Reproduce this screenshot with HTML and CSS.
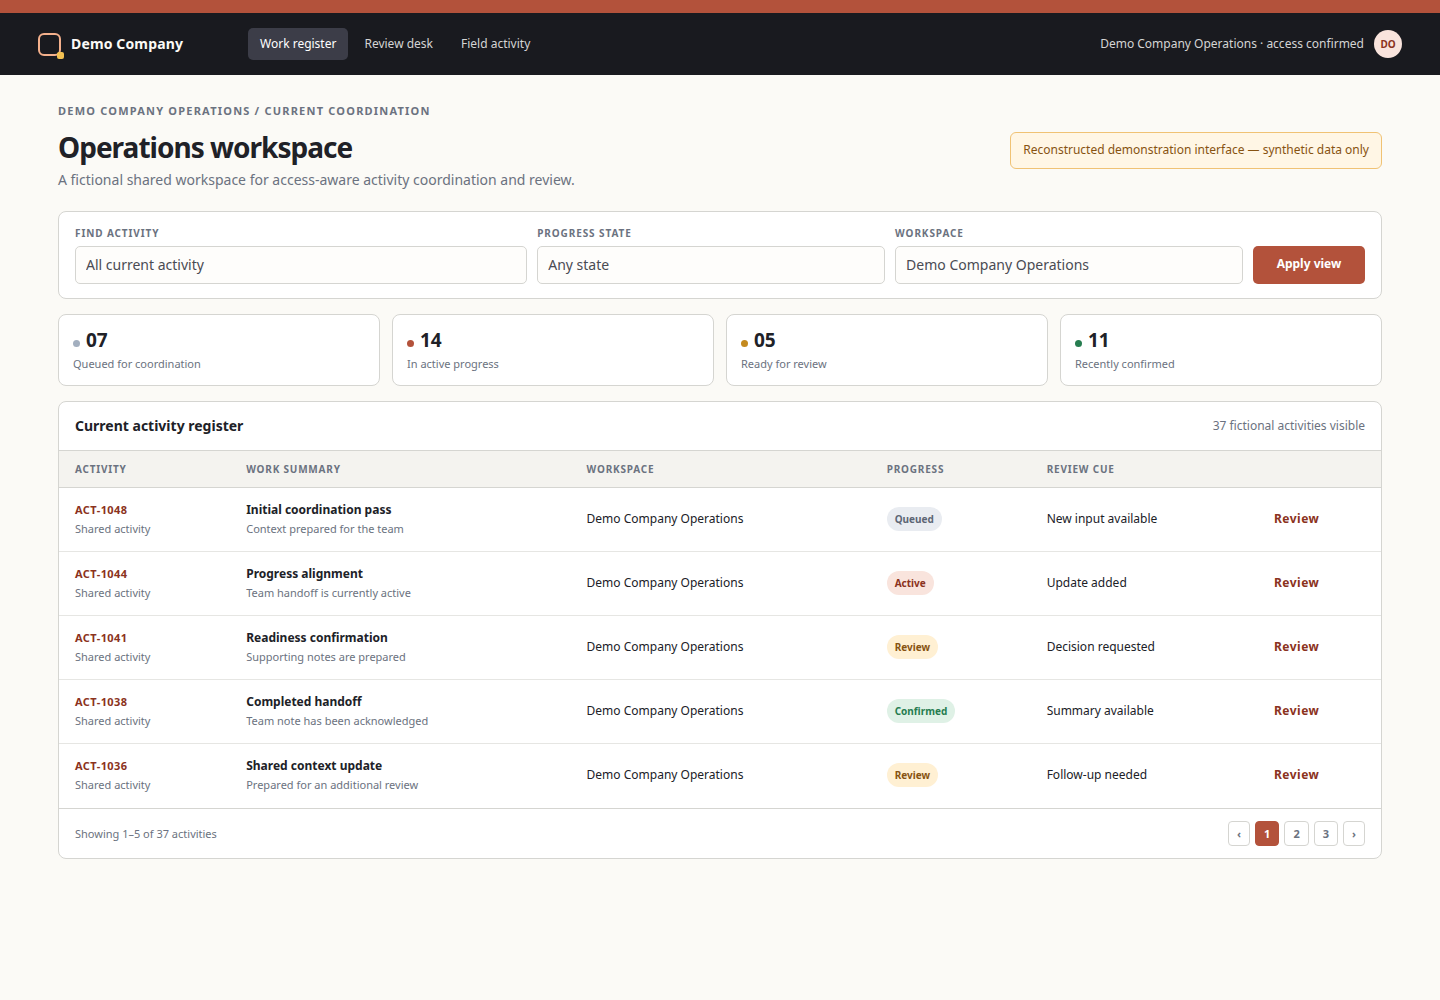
FILE: index.html
```html
<!DOCTYPE html>
<html lang="en">
<head>
    <meta charset="UTF-8">
    <meta name="viewport" content="width=device-width, initial-scale=1.0">
    <title>Operations workspace</title>
    <link rel="stylesheet" href="styles.css">
</head>
<body>

    <header class="topbar">
        <div class="brand">
            <span class="brand-mark"></span>
            <span>Demo Company</span>
        </div>
        <nav class="nav">
            <a href="#" class="active">Work register</a>
            <a href="#">Review desk</a>
            <a href="#">Field activity</a>
        </nav>
        <div class="account">
            <span>Demo Company Operations · access confirmed</span>
            <span class="avatar">DO</span>
        </div>
    </header>

    <main class="page">
        <!-- Page heading -->
        <p class="eyebrow">Demo Company Operations / Current coordination</p>
        <div class="title-row">
            <h1>Operations workspace</h1>
            <div class="notice">Reconstructed demonstration interface — synthetic data only</div>
        </div>
        <p class="subtitle">A fictional shared workspace for access-aware activity coordination and review.</p>

        <!-- Filters -->
        <form class="filters">
            <div class="field">
                <label for="find">Find activity</label>
                <input id="find" type="text" value="All current activity">
            </div>
            <div class="field">
                <label for="state">Progress state</label>
                <select id="state">
                    <option>Any state</option>
                </select>
            </div>
            <div class="field">
                <label for="workspace">Workspace</label>
                <select id="workspace">
                    <option>Demo Company Operations</option>
                </select>
            </div>
            <button type="button" class="apply">Apply view</button>
        </form>

        <!-- Totals -->
        <section class="stats">
            <div class="stat">
                <div class="stat-value"><span class="dot"></span>07</div>
                <div class="stat-label">Queued for coordination</div>
            </div>
            <div class="stat">
                <div class="stat-value"><span class="dot dot-active"></span>14</div>
                <div class="stat-label">In active progress</div>
            </div>
            <div class="stat">
                <div class="stat-value"><span class="dot dot-review"></span>05</div>
                <div class="stat-label">Ready for review</div>
            </div>
            <div class="stat">
                <div class="stat-value"><span class="dot dot-confirmed"></span>11</div>
                <div class="stat-label">Recently confirmed</div>
            </div>
        </section>

        <!-- Register -->
        <section class="register">
            <div class="register-head">
                <h2>Current activity register</h2>
                <span>37 fictional activities visible</span>
            </div>
            <table>
                <colgroup>
                    <col class="col-activity">
                    <col class="col-summary">
                    <col class="col-workspace">
                    <col class="col-progress">
                    <col class="col-cue">
                    <col>
                </colgroup>
                <thead>
                    <tr>
                        <th>Activity</th>
                        <th>Work summary</th>
                        <th>Workspace</th>
                        <th>Progress</th>
                        <th>Review cue</th>
                        <th></th>
                    </tr>
                </thead>
                <tbody>
                    <tr>
                        <td><strong class="code">ACT-1048</strong><small>Shared activity</small></td>
                        <td><strong>Initial coordination pass</strong><small>Context prepared for the team</small></td>
                        <td>Demo Company Operations</td>
                        <td><span class="badge">Queued</span></td>
                        <td>New input available</td>
                        <td><a href="#" class="review-link">Review</a></td>
                    </tr>
                    <tr>
                        <td><strong class="code">ACT-1044</strong><small>Shared activity</small></td>
                        <td><strong>Progress alignment</strong><small>Team handoff is currently active</small></td>
                        <td>Demo Company Operations</td>
                        <td><span class="badge badge-active">Active</span></td>
                        <td>Update added</td>
                        <td><a href="#" class="review-link">Review</a></td>
                    </tr>
                    <tr>
                        <td><strong class="code">ACT-1041</strong><small>Shared activity</small></td>
                        <td><strong>Readiness confirmation</strong><small>Supporting notes are prepared</small></td>
                        <td>Demo Company Operations</td>
                        <td><span class="badge badge-review">Review</span></td>
                        <td>Decision requested</td>
                        <td><a href="#" class="review-link">Review</a></td>
                    </tr>
                    <tr>
                        <td><strong class="code">ACT-1038</strong><small>Shared activity</small></td>
                        <td><strong>Completed handoff</strong><small>Team note has been acknowledged</small></td>
                        <td>Demo Company Operations</td>
                        <td><span class="badge badge-confirmed">Confirmed</span></td>
                        <td>Summary available</td>
                        <td><a href="#" class="review-link">Review</a></td>
                    </tr>
                    <tr>
                        <td><strong class="code">ACT-1036</strong><small>Shared activity</small></td>
                        <td><strong>Shared context update</strong><small>Prepared for an additional review</small></td>
                        <td>Demo Company Operations</td>
                        <td><span class="badge badge-review">Review</span></td>
                        <td>Follow-up needed</td>
                        <td><a href="#" class="review-link">Review</a></td>
                    </tr>
                </tbody>
            </table>
            <div class="register-foot">
                <span>Showing 1–5 of 37 activities</span>
                <div class="pager">
                    <button type="button" aria-label="Previous page">‹</button>
                    <button type="button" class="current">1</button>
                    <button type="button">2</button>
                    <button type="button">3</button>
                    <button type="button" aria-label="Next page">›</button>
                </div>
            </div>
        </section>
    </main>

</body>
</html>
```

FILE: styles.css
```css
* {
    box-sizing: border-box;
}
body {
    margin: 0;
    border-top: 13px solid #b3523b;
    background-color: #fbfaf6;
    color: #202127;
    font-family: "Noto Sans", sans-serif;
    font-size: 14px;
    line-height: 20px;
}
h1, h2, p {
    margin: 0;
}
a {
    text-decoration: none;
}
button, input, select {
    font-family: inherit;
}

/* Top bar */
.topbar {
    display: flex;
    align-items: center;
    padding: 15px 38px;
    background-color: #191a1f;
    color: #d4d4d4;
    font-size: 12px;
}
.brand {
    display: flex;
    align-items: center;
    gap: 10px;
    width: 210px;
    color: #fbfaf6;
    font-size: 14px;
    font-weight: 700;
    letter-spacing: 0.01em;
}
.brand-mark {
    position: relative;
    width: 23px;
    height: 23px;
    border: 2px solid #f3b08c;
    border-radius: 6px;
}
.brand-mark::after {
    content: "";
    position: absolute;
    right: -5px;
    bottom: -5px;
    width: 7px;
    height: 7px;
    border-radius: 2px;
    background-color: #f3c152;
}
.nav {
    display: flex;
    gap: 4px;
}
.nav a {
    padding: 6px 12px;
    border-radius: 5px;
    color: #d4d4d4;
}
.nav .active {
    background-color: #3c3d48;
    color: #ffffff;
}
.account {
    display: flex;
    align-items: center;
    gap: 10px;
    margin-left: auto;
}
.avatar {
    width: 28px;
    height: 28px;
    border-radius: 50%;
    background-color: #f9e4dd;
    color: #8b3220;
    font-size: 10px;
    font-weight: 700;
    line-height: 28px;
    text-align: center;
}

/* Page heading */
.page {
    padding: 28px 58px;
}
.eyebrow {
    margin-bottom: 8px;
    color: #6b7280;
    font-size: 11px;
    font-weight: 700;
    line-height: 16px;
    letter-spacing: 0.11em;
    text-transform: uppercase;
}
.title-row {
    display: flex;
    justify-content: space-between;
    align-items: flex-end;
    margin-bottom: 1px;
}
h1 {
    padding-bottom: 2px;
    font-size: 28px;
    line-height: 40px;
    letter-spacing: -0.035em;
}
.notice {
    padding: 8px 12px 9px;
    border: 1px solid #f0c274;
    border-radius: 6px;
    background-color: #fff6e5;
    color: #875311;
    font-size: 12px;
    line-height: 18px;
}
.subtitle {
    margin-bottom: 21px;
    color: #6b7280;
}

/* Filters */
.filters {
    display: grid;
    grid-template-columns: 1.3fr 1fr 1fr 112px;
    align-items: end;
    gap: 10px;
    margin-bottom: 15px;
    padding: 14px 16px;
    border: 1px solid #d5d5d1;
    border-radius: 8px;
    background-color: #ffffff;
}
.field label {
    display: block;
    margin-bottom: 6px;
    color: #6b7280;
    font-size: 10px;
    font-weight: 700;
    line-height: 14px;
    letter-spacing: 0.09em;
    text-transform: uppercase;
}
.field input,
.field select {
    display: block;
    width: 100%;
    height: 38px;
    padding: 0 10px 2px;
    border: 1px solid #d5d5d1;
    border-radius: 5px;
    background-color: #fefdfb;
    color: #4a4b53;
    font-size: 14px;
    appearance: none;
}
.apply {
    height: 38px;
    padding: 0 0 4px;
    border: none;
    border-radius: 5px;
    background-color: #b3523b;
    color: #ffffff;
    font-size: 12px;
    font-weight: 700;
    cursor: pointer;
}

/* Totals */
.stats {
    display: grid;
    grid-template-columns: repeat(4, 1fr);
    gap: 12px;
    margin-bottom: 15px;
}
.stat {
    padding: 13px 14px;
    border: 1px solid #d5d5d1;
    border-radius: 8px;
    background-color: #ffffff;
}
.stat-value {
    display: flex;
    align-items: baseline;
    gap: 6px;
    margin-bottom: 4px;
    font-size: 19px;
    font-weight: 700;
    line-height: 24px;
}
.dot {
    width: 7px;
    height: 7px;
    border-radius: 50%;
    background-color: #a3afbf;
}
.dot-active {
    background-color: #b3523b;
}
.dot-review {
    background-color: #c48a1e;
}
.dot-confirmed {
    background-color: #267d50;
}
.stat-label {
    color: #6b7280;
    font-size: 11px;
    line-height: 16px;
}

/* Register */
.register {
    overflow: hidden;
    border: 1px solid #d5d5d1;
    border-radius: 8px;
    background-color: #ffffff;
}
.register-head,
.register-foot {
    display: flex;
    justify-content: space-between;
    align-items: center;
    color: #6b7280;
}
.register-head {
    padding: 14px 16px;
    font-size: 12px;
}
h2 {
    color: #202127;
    font-size: 14px;
}
table {
    width: 100%;
    table-layout: fixed;
    border-collapse: separate;
    border-spacing: 0;
    font-size: 12px;
}
.col-activity {
    width: 12.95%;
}
.col-summary {
    width: 25.75%;
}
.col-workspace {
    width: 22.7%;
}
.col-progress {
    width: 12.1%;
}
.col-cue {
    width: 17.2%;
}
th {
    padding: 10px 16px;
    border-top: 1px solid #d5d5d1;
    border-bottom: 1px solid #d5d5d1;
    background-color: #f4f3ef;
    color: #6b7280;
    font-size: 10px;
    line-height: 16px;
    letter-spacing: 0.08em;
    text-align: left;
    text-transform: uppercase;
}
td {
    padding: 11px 16px 13px;
    border-bottom: 1px solid #e6e6e3;
    line-height: 19px;
}
tbody tr:last-child td {
    padding-bottom: 14px;
    border-bottom-color: #d5d5d1;
}
td strong,
td small {
    display: block;
}
td strong {
    line-height: 21px;
}
td small {
    color: #6b7280;
    font-size: 11px;
    line-height: 18px;
}
.code {
    color: #8b3220;
    font-size: 11px;
    letter-spacing: 0.04em;
}
.badge {
    display: inline-block;
    padding: 0 8px;
    border-radius: 12px;
    background-color: #e9ecf1;
    color: #5d6675;
    font-size: 10px;
    font-weight: 700;
    line-height: 24px;
}
.badge-active {
    background-color: #f9e4dd;
    color: #8b3220;
}
.badge-review {
    background-color: #fff0d3;
    color: #875311;
}
.badge-confirmed {
    background-color: #dff1e6;
    color: #267d50;
}
.review-link {
    color: #8b3220;
    font-weight: 700;
    letter-spacing: 0.04em;
}
.register-foot {
    padding: 12px 16px;
    font-size: 11px;
}
.pager {
    display: flex;
    gap: 5px;
}
.pager button {
    height: 25px;
    padding: 0 8px;
    border: 1px solid #d5d5d1;
    border-radius: 4px;
    background-color: #ffffff;
    color: #6b7280;
    font-size: 11px;
    font-weight: 700;
    cursor: pointer;
}
.pager .current {
    border-color: #b3523b;
    background-color: #b3523b;
    color: #ffffff;
}

@media only screen and (max-width: 900px) {
    .page {
        padding: 20px;
    }
    .topbar, .title-row {
        flex-wrap: wrap;
    }
    .filters, .stats {
        grid-template-columns: 1fr 1fr;
    }
}
```
